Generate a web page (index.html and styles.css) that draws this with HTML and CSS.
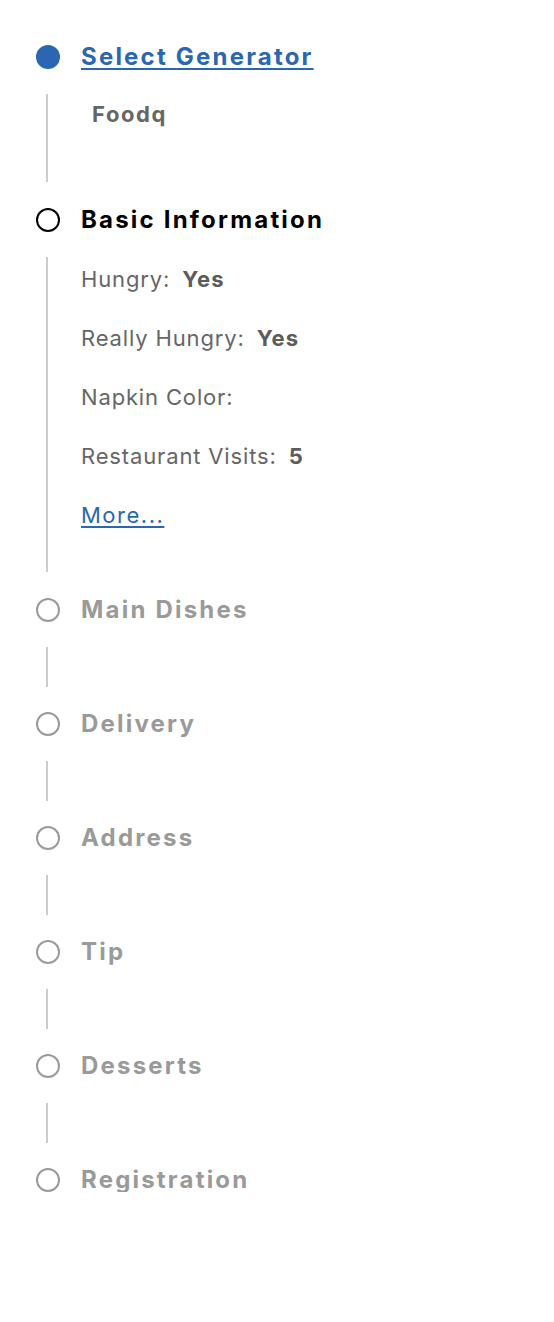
FILE: index.html
```html
<!DOCTYPE html>
<html lang="en">
<head>
<meta charset="utf-8">
<title>Stepper</title>
<link rel="stylesheet" href="styles.css">
</head>
<body>
<ol class="stepper">
  <li class="step step--done">
    <div class="step-head">
      <span class="dot dot--filled"></span>
      <a class="step-title step-title--link" href="#">Select Generator</a>
    </div>
    <div class="step-body step-body--first">
      <div class="generator">Foodq</div>
    </div>
  </li>
  <li class="step step--current">
    <div class="step-head">
      <span class="dot dot--current"></span>
      <span class="step-title step-title--current">Basic Information</span>
    </div>
    <div class="step-body step-body--details">
      <div class="field"><span class="label">Hungry:</span><span class="value">Yes</span></div>
      <div class="field"><span class="label">Really Hungry:</span><span class="value">Yes</span></div>
      <div class="field"><span class="label">Napkin Color:</span><span class="value"></span></div>
      <div class="field"><span class="label">Restaurant Visits:</span><span class="value">5</span></div>
      <div class="field"><a class="more" href="#">More...</a></div>
    </div>
  </li>
  <li class="step">
    <div class="step-head"><span class="dot"></span><span class="step-title">Main Dishes</span></div>
    <div class="step-body"></div>
  </li>
  <li class="step">
    <div class="step-head"><span class="dot"></span><span class="step-title">Delivery</span></div>
    <div class="step-body"></div>
  </li>
  <li class="step">
    <div class="step-head"><span class="dot"></span><span class="step-title">Address</span></div>
    <div class="step-body"></div>
  </li>
  <li class="step">
    <div class="step-head"><span class="dot"></span><span class="step-title">Tip</span></div>
    <div class="step-body"></div>
  </li>
  <li class="step">
    <div class="step-head"><span class="dot"></span><span class="step-title">Desserts</span></div>
    <div class="step-body"></div>
  </li>
  <li class="step step--last">
    <div class="step-head"><span class="dot"></span><span class="step-title">Registration</span></div>
  </li>
</ol>
</body>
</html>
```
FILE: styles.css
```css
html, body {
  margin: 0;
  padding: 0;
  background: #ffffff;
}

body {
  font-family: Inter, "Liberation Sans", Arial, sans-serif;
  color: #666666;
}

.stepper {
  list-style: none;
  margin: 0;
  padding: 45px 0 0 36px;
}

.step-head {
  display: flex;
  align-items: center;
  gap: 21px;
  height: 24px;
}

.dot {
  box-sizing: border-box;
  flex: none;
  width: 24px;
  height: 24px;
  border-radius: 50%;
  border: 2px solid #9a9a9a;
  background: #ffffff;
}

.dot--filled {
  background: #2a66b1;
  border-color: #2a66b1;
}

.dot--current {
  border-color: #000000;
}

.step-title {
  font-size: 24px;
  line-height: 32px;
  font-weight: 700;
  letter-spacing: 2.2px;
  color: #9a9a9a;
  white-space: nowrap;
}

.step-title--link {
  color: #2a66b1;
  text-decoration: underline;
  text-decoration-thickness: 2px;
  text-underline-offset: 3px;
}

.step-title--current {
  color: #000000;
}

.step-body {
  box-sizing: border-box;
  margin: 25px 0 25px 10px;
  height: 40px;
  border-left: 2px solid #cccccc;
}

.step-body--first {
  margin-bottom: 26px;
  height: 88px;
  padding: 8px 0 0 44px;
}

.step-body--details {
  margin-bottom: 26px;
  height: 315px;
  padding: 10px 0 0 33px;
  display: flex;
  flex-direction: column;
  gap: 35px;
}

.generator {
  font-size: 22px;
  line-height: 24px;
  font-weight: 700;
  letter-spacing: 1.6px;
  color: #666666;
}

.field {
  display: flex;
  align-items: baseline;
  gap: 12px;
  font-size: 22px;
  line-height: 24px;
  letter-spacing: 0.85px;
  color: #666666;
}

.value {
  font-weight: 700;
  letter-spacing: 1.2px;
  color: #5c5c5c;
}

.more {
  color: #2a66b1;
  letter-spacing: 1.5px;
  text-decoration: underline;
  text-decoration-thickness: 1.5px;
  text-underline-offset: 3px;
}
```
